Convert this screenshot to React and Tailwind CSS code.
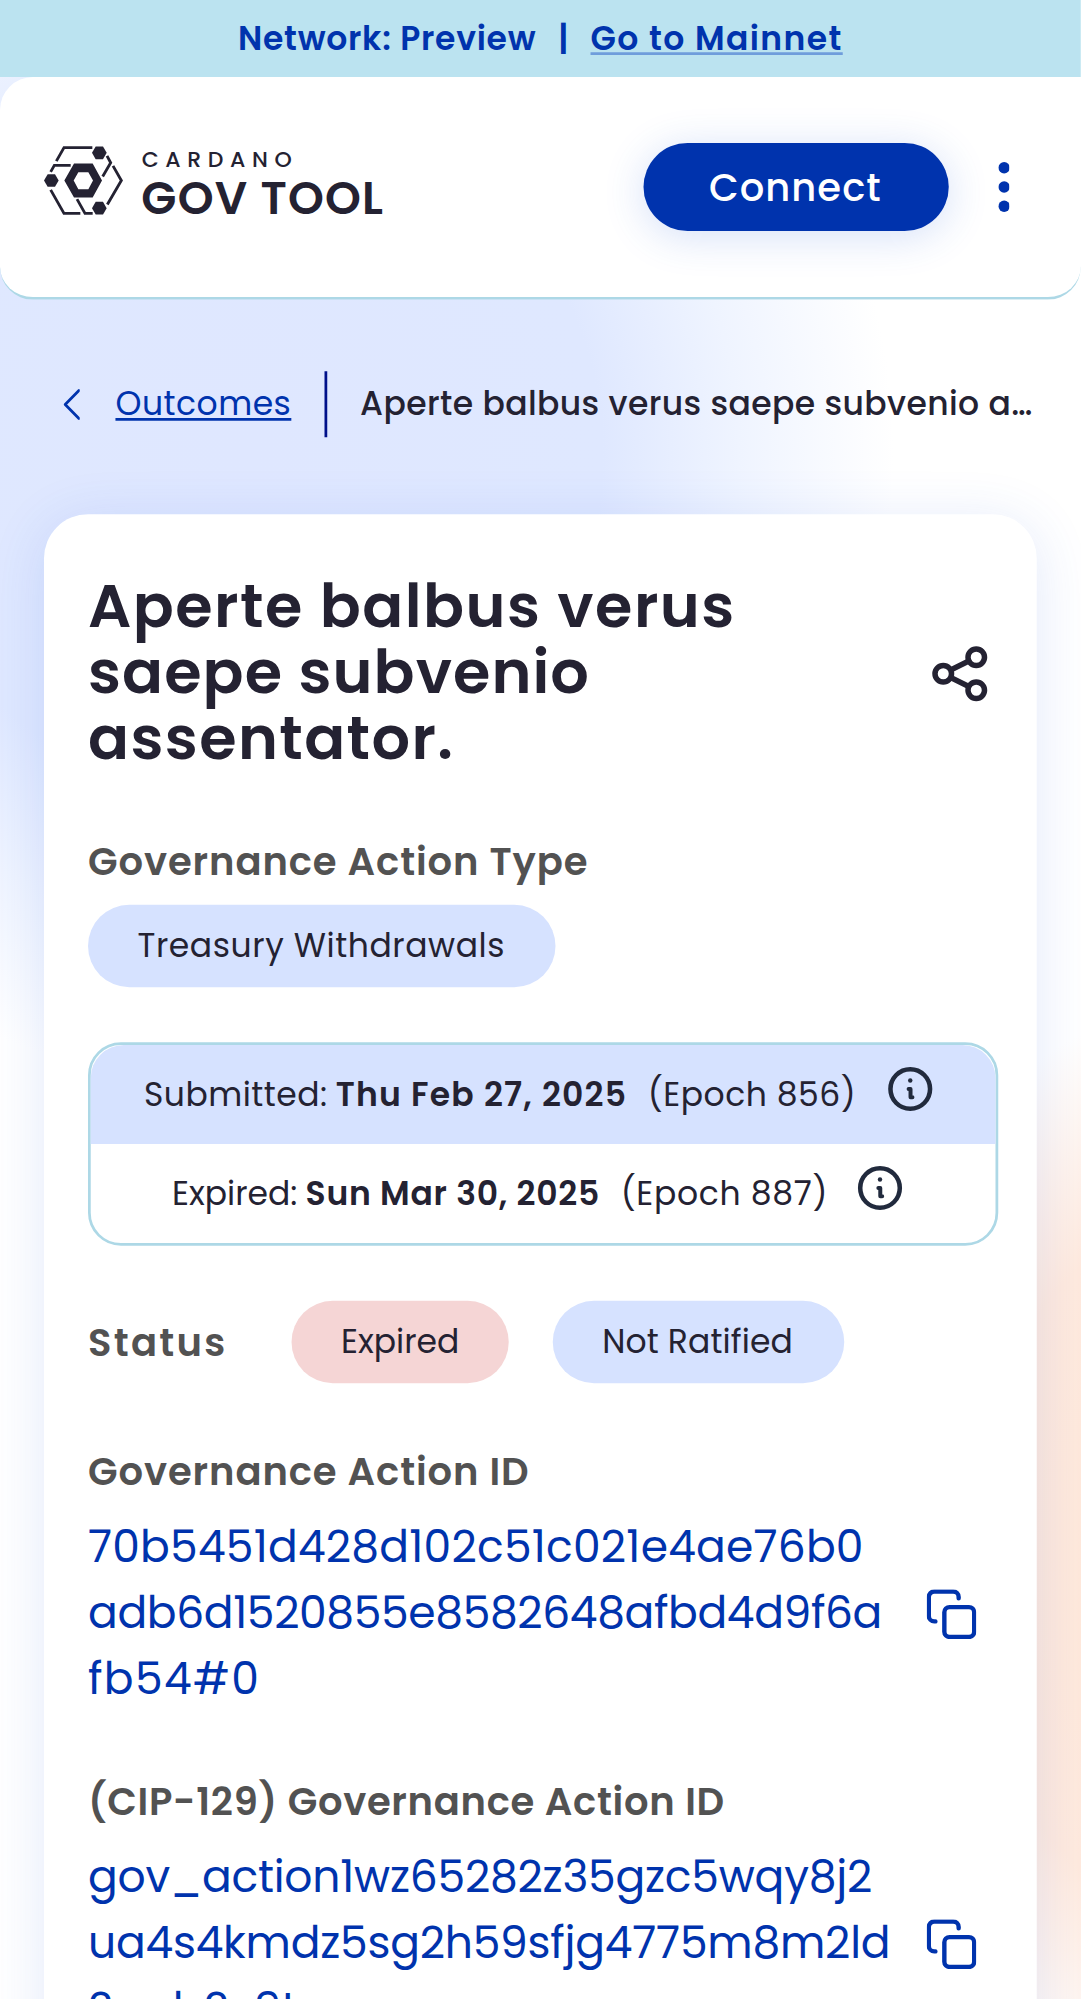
import React from "react";

const INK = "#242232";

function Logo() {
  return (
    <svg className="mt-[0.8px] block" width="125" height="26" viewBox="42 46 1031 214" fill="none">
      <g stroke={INK} strokeWidth="8.500">
        <path d="M79 92 L102 51.5 H187" />
        <path d="M62 124 L73 104.500 H122" />
        <path d="M62 178 L102 248.500 H151" />
        <path d="M141 206 L165 248.500 H188" />
        <path d="M231 76 L242 97 L218 138" />
        <path d="M249 106 L274 150 L232 222" />
      </g>
      <g fill={INK}>
        <path d="M197 48 H219 L230 67 L219 86 H197 L186 67 Z" />
        <path d="M53 131 H75 L86 150 L75 169 H53 L42 150 Z" />
        <path d="M197 214 H219 L230 233 L219 252 H197 L186 233 Z" />
        <path
          fillRule="evenodd"
          d="M132 99 H188 L216 150 L188 201 H132 L103 150 Z M145 125 L131 150 L145 176 H175 L189 150 L175 125 Z"
        />
      </g>
      <g fill={INK} fontFamily="Poppins, Inter, sans-serif">
        <text x="335" y="111" fontSize="66" fontWeight="500" textLength="450">CARDANO</text>
        <text x="334" y="250" fontSize="137" fontWeight="600" textLength="725">GOV TOOL</text>
      </g>
    </svg>
  );
}

function InfoIcon() {
  return (
    <svg className="mb-[3.400px] ml-[7.300px] block size-6 shrink-0" viewBox="0 0 24 24" fill="none" stroke="#212A3D" strokeLinecap="round" strokeLinejoin="round">
      <circle cx="12" cy="12" r="7.200" strokeWidth="1.650" />
      <path d="M11.400 12h.7v3h.7" strokeWidth="1.450" />
      <circle cx="12" cy="8.900" r=".8" fill="#212A3D" stroke="none" />
    </svg>
  );
}

function CopyIcon() {
  return (
    <svg className="mt-[27px] block size-[18px] shrink-0" viewBox="0 0 18 18" fill="none" stroke="#0033AD" strokeWidth="1.600" strokeLinecap="round">
      <path d="M3.150 11.600H2.750a2 2 0 0 1-2-2V2.750a2 2 0 0 1 2-2H9.600a2 2 0 0 1 2 2V3.200" />
      <rect x="6.400" y="6.400" width="10.850" height="10.850" rx="1.900" />
    </svg>
  );
}

function ShareIcon() {
  return (
    <svg className="block size-6 shrink-0" viewBox="0 0 24 24" fill="none" stroke={INK} strokeWidth="2">
      <circle cx="6" cy="12" r="3" />
      <circle cx="18" cy="6" r="3" />
      <circle cx="18" cy="18" r="3" />
      <path d="M8.700 10.650 15.300 7.350M8.700 13.350l6.600 3.300" />
    </svg>
  );
}

function Chip({ children, className }) {
  return <div className={`flex h-[30px] items-center rounded-full px-[18px] text-[12px] leading-4 ${className}`}>{children}</div>;
}

function DateRow({ label, date, epoch, className = "", labelClass = "", dateClass, epochClass }) {
  return (
    <div className={`flex h-9 items-center justify-center text-[12px] leading-[18px] whitespace-pre ${className}`}>
      <span className={labelClass}>{label}</span>
      <span className={`ml-[3px] font-semibold ${dateClass}`}>{date}</span>
      <span className={`ml-[7.500px] ${epochClass}`}>{epoch}</span>
      <InfoIcon />
    </div>
  );
}

function IdField({ label, labelClass, lines }) {
  return (
    <section className="h-[120px]">
      <h2 className={`text-[14px] leading-5 font-semibold text-[#525252] ${labelClass}`}>{label}</h2>
      <div className="mt-[6px] flex justify-between pr-[6px] text-[16px] leading-6 text-[#0033AD]">
        <p>
          {lines.map(([text, tracking]) => (
            <span key={text} className={`block whitespace-nowrap ${tracking}`}>{text}</span>
          ))}
        </p>
        <CopyIcon />
      </div>
    </section>
  );
}

export default function App() {
  return (
    <div className="h-[1999px] w-[1081px] overflow-hidden">
      <div className="h-[727px] w-[394px] origin-top-left scale-[2.75] overflow-hidden bg-white bg-[radial-gradient(235px_230px_at_90px_165px,#dfe7ff_0%,#dfe8ff_55%,#eff4ff_76%,#ffffff_100%),radial-gradient(110px_200px_at_420px_570px,#ffe8d9_0%,#ffeade_60%,#fff4ee_80%,rgba(255,255,255,0)_100%)] bg-blend-multiply font-[Poppins,Inter,sans-serif] text-[#242232]">
        <div className="flex h-7 w-[393px] items-center justify-center bg-[#BBE3F0] text-[12px] leading-4 font-semibold whitespace-pre text-[#0033AD]">
          <span className="tracking-[0.270px]">Network: Preview</span>
          <span className="mr-2 ml-2">|</span>
          <a className="tracking-[0.510px] underline decoration-[#6F9DDB]">Go to Mainnet</a>
        </div>

        <header className="flex h-[81px] w-[393px] items-start justify-between rounded-[12px] border-b border-[#ADD8E6] bg-white pt-6 pr-[26px] pl-4">
          <Logo />
          <div className="flex items-center">
            <button className="h-8 w-[111px] rounded-full bg-[#0033AD] text-[14px] leading-6 font-medium tracking-[0.380px] text-white shadow-[0_2px_15px_rgba(47,98,220,0.2)]">
              Connect
            </button>
            <svg className="ml-[18px] block" width="4.300" height="20" viewBox="0 0 4.300 20" fill="#0033AD">
              <circle cx="2.150" cy="3" r="2.080" />
              <circle cx="2.150" cy="10" r="2.080" />
              <circle cx="2.150" cy="17" r="2.080" />
            </svg>
          </div>
        </header>

        <nav className="mt-[26px] flex h-6 items-center text-[12px] leading-[18px]">
          <svg className="ml-[22.800px] block" width="6.500" height="12" viewBox="0 0 6.500 12" fill="none" stroke="#0033AD" strokeWidth="1" strokeLinecap="round" strokeLinejoin="round">
            <path d="M5.700 1 .7 6.100l5 5.100" />
          </svg>
          <a className="ml-[12.700px] tracking-[0.180px] text-[#0033AD] underline">Outcomes</a>
          <span className="ml-3 h-6 w-px bg-[#00108A]" />
          <span className="ml-3 w-[247px] truncate font-medium tracking-[0.140px]">Aperte balbus verus saepe subvenio assentator.</span>
        </nav>

        <main className="mx-4 mt-7 h-[800px] w-[361px] rounded-[16px] bg-white px-4 pt-[22px] shadow-[0_3px_20px_rgba(47,98,220,0.14)]">
          <div className="flex items-center justify-between">
            <h1 className="text-[22px] leading-6 font-semibold whitespace-nowrap">
              <span className="block tracking-[0.540px]">Aperte balbus verus</span>
              <span className="block tracking-[0.390px]">saepe subvenio</span>
              <span className="block tracking-[0.510px]">assentator.</span>
            </h1>
            <ShareIcon />
          </div>
          <h2 className="mt-[22px] text-[14px] leading-5 font-semibold tracking-[0.330px] text-[#525252]">Governance Action Type</h2>
          <div className="mt-[6px] flex">
            <Chip className="w-[170px] bg-[#D6E2FF] tracking-[0.210px]">Treasury Withdrawals</Chip>
          </div>

          <div className="mt-5 h-[74px] w-[331px] rounded-[12px] border border-[#ADD8E6]">
            <DateRow
              label="Submitted:"
              date="Thu Feb 27, 2025"
              epoch="(Epoch 856)"
              className="rounded-t-[12px] bg-[#D6E2FF]"
              labelClass="tracking-[0.180px]"
              dateClass="tracking-[0.430px]"
              epochClass="tracking-[0.190px]"
            />
            <DateRow
              label="Expired:"
              date="Sun Mar 30, 2025"
              epoch="(Epoch 887)"
              dateClass="tracking-[0.270px]"
              epochClass="tracking-[0.250px]"
            />
          </div>

          <div className="mt-5 mb-[22px] flex items-center">
            <h2 className="w-[74px] text-[14px] leading-5 font-semibold tracking-[0.820px] text-[#525252]">Status</h2>
            <Chip className="bg-[#F5D5D5]">Expired</Chip>
            <Chip className="ml-4 w-[106px] bg-[#D6E2FF] tracking-[0.040px]">Not Ratified</Chip>
          </div>

          <IdField
            label="Governance Action ID"
            labelClass="tracking-[0.330px]"
            lines={[
              ["70b5451d428d102c51c021e4ae76b0", "tracking-[0.080px]"],
              ["adb6d1520855e8582648afbd4d9f6a", "tracking-[-0.130px]"],
              ["fb54#0", "tracking-[0.500px]"],
            ]}
          />
          <IdField
            label="(CIP-129) Governance Action ID"
            labelClass="tracking-[0.250px]"
            lines={[
              ["gov_action1wz65282z35gzc5wqy8j2", "tracking-[-0.080px]"],
              ["ua4s4kmdz5sg2h59sfjg4775m8m2ld", "tracking-[-0.080px]"],
              ["2qqlz2y9t", "tracking-normal"],
            ]}
          />
        </main>
      </div>
    </div>
  );
}
